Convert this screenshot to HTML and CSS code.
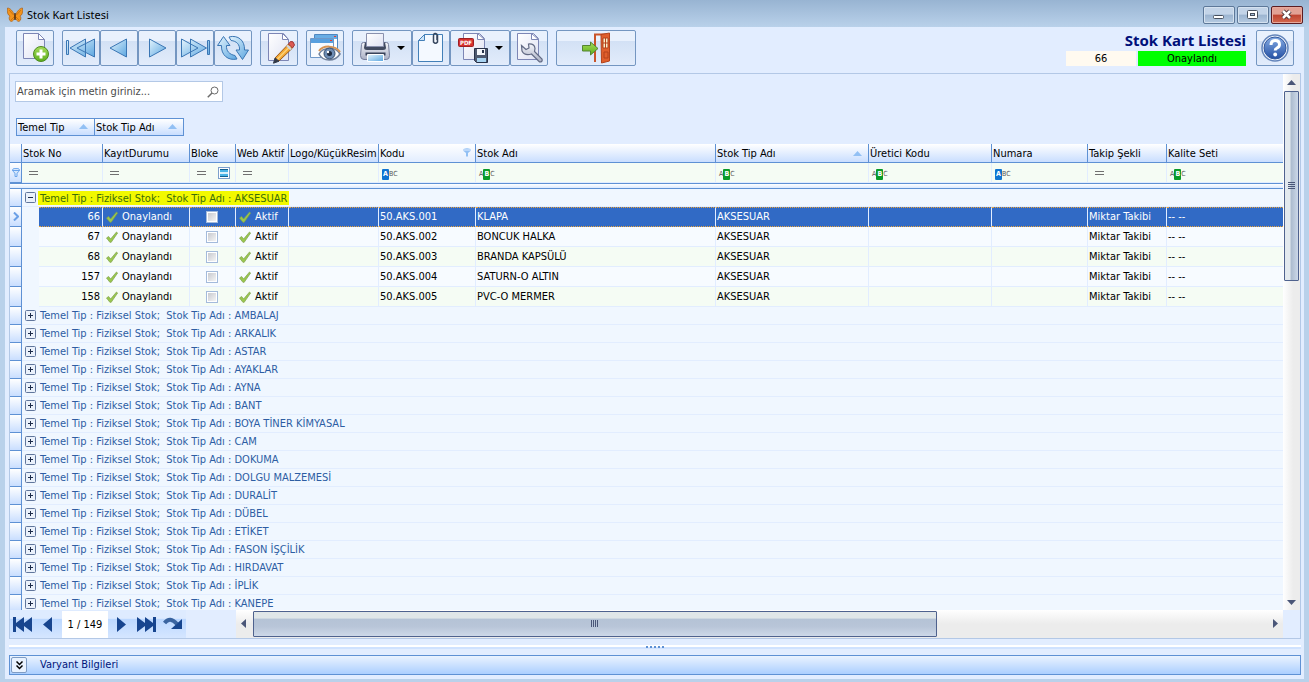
FILE: index.html
```html
<!DOCTYPE html>
<html lang="tr">
<head>
    <meta charset="UTF-8">
    <meta name="viewport" content="width=device-width, initial-scale=1.0">
    <title>Stok Kart Listesi</title>
    <link rel="stylesheet" href="styles.css">
</head>
<body>
    <!-- Shared gradients and symbols -->
    <svg class="sprite" aria-hidden="true">
        <defs>
            <linearGradient id="sky" x1="0" y1="0" x2="1" y2="1">
                <stop offset="0" stop-color="#e4f4fd"/>
                <stop offset="1" stop-color="#5ba6e0"/>
            </linearGradient>
            <linearGradient id="paper" x1="0" y1="0" x2="1" y2="1">
                <stop offset="0" stop-color="#ffffff"/>
                <stop offset="1" stop-color="#dfe2f3"/>
            </linearGradient>
            <linearGradient id="green" x1="0" y1="0" x2="0" y2="1">
                <stop offset="0" stop-color="#a5dc58"/>
                <stop offset="1" stop-color="#5cae1c"/>
            </linearGradient>
            <linearGradient id="metal" x1="0" y1="0" x2="0" y2="1">
                <stop offset="0" stop-color="#f4f5fa"/>
                <stop offset="1" stop-color="#a9afc4"/>
            </linearGradient>
            <linearGradient id="help" x1="0" y1="0" x2="0" y2="1">
                <stop offset="0" stop-color="#86ace4"/>
                <stop offset="1" stop-color="#2450a4"/>
            </linearGradient>
        </defs>
        <symbol id="check" viewBox="0 0 12 12">
            <path d="M.5 7 2.6 5.500 4.600 8 10.500 1 11.600 2 5.200 11.300H3.900z" fill="#9ac84e" stroke="#7fa04e" stroke-width=".7"/>
        </symbol>
        <symbol id="plus" viewBox="0 0 11 11">
            <rect x=".5" y=".5" width="10" height="10" rx="1" fill="#eaf1fb" stroke="#60769c"/>
            <path d="M3 5.500h5M5.500 3v5" stroke="#1d2c4a"/>
        </symbol>
        <symbol id="minus" viewBox="0 0 11 11">
            <rect x=".5" y=".5" width="10" height="10" rx="1" fill="#eaf1fb" stroke="#60769c"/>
            <path d="M3 5.500h5" stroke="#1d2c4a"/>
        </symbol>
        <symbol id="asc" viewBox="0 0 9 5">
            <path d="M0 5 4.500 0 9 5z" fill="#92c0f4"/>
        </symbol>
        <symbol id="funnel" viewBox="0 0 8 9">
            <path d="M.7 1.500C.7 0 7.300 0 7.300 1.500V3L5 5.200V8.500H3V5.200L.7 3zM.7 2.500h6.600" fill="#d5e7fd" stroke="#6aa4ec"/>
        </symbol>
        <symbol id="funnel-on" viewBox="0 0 8 9">
            <path d="M.5 1q3.500-1.500 7 0v2L5 5v3.500H3V5L.5 3z" fill="#92c0f4"/>
            <path d="M1 2h6" stroke="#e2edff"/>
        </symbol>
        <symbol id="equals" viewBox="0 0 9 4">
            <path d="M0 .5h9M0 3.500h9" stroke="#707070"/>
        </symbol>
    </svg>

    <!-- Title bar -->
    <header class="titlebar">
        <svg class="app-icon" viewBox="0 0 16 16">
            <path d="M8 9C6 4 3 1 .5 1 0 5 .5 8 3 9 1.500 10.500 2 13.500 4 14.500 6 14.500 7.500 12 8 10z" fill="#f3941d" stroke="#a5560c" stroke-width=".6"/>
            <path d="M8 9c2-5 5-8 7.500-8 .5 4 0 7-2.500 8 1.500 1.500 1 4.500-1 5.500-2 0-3.500-2.500-4-4.500z" fill="#f3941d" stroke="#a5560c" stroke-width=".6"/>
            <path d="M2 3l4.500 5M14 3 9.500 8M4 13l3-3M12 13l-3-3" stroke="#b9650f" stroke-width=".7"/>
            <path d="M8 6v7" stroke="#3b1d05" stroke-width="1.200"/>
        </svg>
        <span class="titlebar-text">Stok Kart Listesi</span>
        <button class="win-btn" aria-label="Minimize">
            <svg width="14" height="12" viewBox="0 0 14 12"><rect x="1.500" y="6.500" width="10" height="3" rx="1" fill="#fff" stroke="#47505e"/></svg>
        </button>
        <button class="win-btn" aria-label="Maximize">
            <svg width="14" height="12" viewBox="0 0 14 12"><rect x="1.500" y="1.500" width="10" height="8" rx="1" fill="#fff" stroke="#47505e"/><rect x="4.500" y="4.500" width="4" height="2" fill="#a9c0da" stroke="#47505e"/></svg>
        </button>
        <button class="win-btn win-close" aria-label="Close">
            <svg width="14" height="12" viewBox="0 0 14 12"><path d="M3 2l7 7M10 2 3 9" stroke="#4a3034" stroke-width="4.500"/><path d="M3 2l7 7M10 2 3 9" stroke="#fff" stroke-width="2.500"/></svg>
        </button>
    </header>

    <div class="window">
        <!-- Toolbar -->
        <div class="toolbar">
            <div class="btn-group">
                <button class="tool" aria-label="Yeni">
                    <svg width="32" height="32" viewBox="0 0 32 32"><path d="M4.500 1.500h15l6 6v19h-21z" fill="url(#paper)" stroke="#7d86b5"/><path d="M19.500 1.500v6h6z" fill="#fff" stroke="#7d86b5"/><circle cx="22" cy="22" r="7.500" fill="url(#green)" stroke="#4d8b20"/><path d="M22 17.500v9M17.500 22h9" stroke="#fff" stroke-width="3"/></svg>
                </button>
            </div>
            <div class="btn-group">
                <button class="tool" aria-label="İlk">
                    <svg width="32" height="32" viewBox="0 0 32 32"><g fill="url(#sky)" stroke="#3a76b4"><path d="M1.500 8.500h2v14h-2zM20.500 7v18L5 16zM29.500 7v18L12 16z"/></g></svg>
                </button>
                <button class="tool" aria-label="Önceki">
                    <svg width="32" height="32" viewBox="0 0 32 32"><path d="M23.500 7v18L7 16z" fill="url(#sky)" stroke="#3a76b4"/></svg>
                </button>
                <button class="tool" aria-label="Sonraki">
                    <svg width="32" height="32" viewBox="0 0 32 32"><path d="M8.500 7v18l16.500-9z" fill="url(#sky)" stroke="#3a76b4"/></svg>
                </button>
                <button class="tool" aria-label="Son">
                    <svg width="32" height="32" viewBox="0 0 32 32"><g fill="url(#sky)" stroke="#3a76b4"><path d="M28.500 8.500h2v14h-2zM11.500 7v18l16-9zM2.500 7v18L19 16z"/></g></svg>
                </button>
                <button class="tool" aria-label="Yenile">
                    <svg width="32" height="32" viewBox="0 0 32 32"><g fill="url(#sky)" stroke="#3a76b4"><path d="M6.500 4.500 13 13.500H9.500C9 19 12.500 22.500 18 23.500l2 3.500C11 29 4 23 4.500 13.500H.5z"/><path d="M25.500 27.500 19 18h3.500C23 12.500 19.500 9 14 8.500L12 5c9-2.500 16 3.500 15.500 13h4z"/></g></svg>
                </button>
            </div>
            <div class="btn-group">
                <button class="tool" aria-label="Düzenle">
                    <svg width="32" height="32" viewBox="0 0 32 32"><path d="M5.500 1.500h15l5 6v21h-20z" fill="url(#paper)" stroke="#7d86b5"/><path d="M19.500 1.500v6h6z" fill="#fff" stroke="#7d86b5"/><path d="M12 26 25.500 12l4 4L16 29z" fill="#f5a833" stroke="#9c5b1c"/><path d="M14 27.500 27.500 14" stroke="#fcd27c" stroke-width="1.500"/><path d="M12 26l4 3.200-5.500 2z" fill="#333a48" stroke="#333a48"/><path d="m25.500 12 2-2.500q3-1 4 3.500l-2 3z" fill="#dc5a52" stroke="#a03a38"/><path d="m24 13.500 4 4" stroke="#cfd5e2" stroke-width="2"/></svg>
                </button>
            </div>
            <div class="btn-group">
                <button class="tool" aria-label="Göster">
                    <svg width="32" height="32" viewBox="0 0 32 32"><path d="M5.500 2.500h23v20h-23z" fill="#fff" stroke="#4f87c1"/><path d="M6 3h22v4H6z" fill="#69ade4"/><path d="M1.500 6.500h23v19h-23z" fill="#f8fbff" stroke="#6f98c8"/><path d="M2 7h22v4H2z" fill="#58a0df"/><path d="M25 4h2v1h-2zM21 8h2v1h-2z" fill="#e53b30"/><path d="M10 22C14 15 26 14 31 22 26 30 14 30 10 22z" fill="#fff" stroke="#71829d" stroke-width="1.500"/><path d="M10 19C14 13 26 13 31 20" fill="none" stroke="#d79555" stroke-width="2"/><circle cx="20.500" cy="21.500" r="5.500" fill="#6e8db4" stroke="#354c6c"/><circle cx="20.500" cy="21.500" r="2.500" fill="#1d2a40"/><circle cx="19" cy="20" r="1.200" fill="#fff"/></svg>
                </button>
            </div>
            <div class="btn-group">
                <button class="tool tool-menu" aria-label="Yazdır">
                    <svg width="32" height="32" viewBox="0 0 32 32"><path d="M2.500 12.500q0-2 2-2h23q2 0 2 2l1 11q0 4-3 4H5q-3.500 0-3.500-4z" fill="url(#metal)" stroke="#777f9d"/><path d="M6 10.500h20l1 5q0 2.500-3 2.500H8q-3 0-3-2.500z" fill="#414a60"/><path d="M7.500 1.500h17v13h-17z" fill="url(#paper)" stroke="#8a91ae"/><path d="M6.500 20.500h20v3h-20z" fill="#39435a"/><path d="M8.500 22.500h16v7h-16z" fill="url(#sky)" stroke="#fff"/></svg>
                    <svg class="caret" width="8" height="4" viewBox="0 0 8 4"><path d="M0 0h8L4 4z"/></svg>
                </button>
                <button class="tool" aria-label="Ek">
                    <svg width="32" height="32" viewBox="0 0 32 32"><path d="M9.500 2.500h18v27h-24v-21z" fill="#f4f9ff" stroke="#4380b8"/><path d="M9.500 2.500v6h-6z" fill="#cde4f8" stroke="#4380b8"/><path d="M22.500 3v7q-2 2.500-4 0V4q0-3 2-2.500t1.500 2V8" fill="none" stroke="#36465e" stroke-width="1.500"/></svg>
                </button>
                <button class="tool tool-menu" aria-label="PDF kaydet">
                    <svg width="32" height="32" viewBox="0 0 32 32"><path d="M6.500 1.500h16l5 5v21h-21z" fill="url(#paper)" stroke="#7d86b5"/><path d="M20.500 1.500v6h7z" fill="#fff" stroke="#7d86b5"/><rect x="1.500" y="6.500" width="15" height="8" rx="1" fill="#d5302e" stroke="#9d2023"/><text x="9" y="13" class="pdf-label">PDF</text><path d="M17.500 16.500h13v14h-11l-2-2z" fill="#4d586f" stroke="#273249"/><path d="M20 17h8v6h-8z" fill="#f4f6fb"/><path d="M25 18h2v3h-2z" fill="#273249"/><path d="M20 26h9v4h-9z" fill="#a9d4f2"/></svg>
                    <svg class="caret" width="8" height="4" viewBox="0 0 8 4"><path d="M0 0h8L4 4z"/></svg>
                </button>
                <button class="tool" aria-label="Ayarlar">
                    <svg width="32" height="32" viewBox="0 0 32 32"><path d="M4.500 1.500h16l5 5v21h-21z" fill="url(#paper)" stroke="#7d86b5"/><path d="M18.500 1.500v6h7z" fill="#fff" stroke="#7d86b5"/><path d="M8.500 13.500l4.500 4 3-1.500-.5-4q6-.5 6.500 4.500l-.5 3 7.500 7.500q1 3-2.500 3l-8-8q-7 2-9.500-3z" fill="url(#metal)" stroke="#626a84" stroke-width="1.200"/></svg>
                </button>
            </div>
            <div class="btn-group">
                <button class="tool tool-wide" aria-label="Çıkış">
                    <svg width="32" height="32" viewBox="0 0 32 32"><path d="M15 30V2.500h11" fill="none" stroke="#c9542a" stroke-width="2"/><path d="M21 2.500 29.500 1v28l-8 2z" fill="#e05f2c" stroke="#b3431c"/><path d="M23 6h5v10h-5z" fill="#fbeec8" stroke="#b3431c"/><path d="M25.500 6v10M23 11h5M24 20h4v6h-4z" fill="none" stroke="#b3431c"/><path d="M2.500 13.500h8v-3.500l7.500 6.500-7.500 6.500v-4h-8z" fill="url(#green)" stroke="#548433"/></svg>
                </button>
            </div>
            <div class="record">
                <h1 class="record-title">Stok Kart Listesi</h1>
                <div class="record-info">
                    <span class="record-no">66</span>
                    <span class="record-state">Onaylandı</span>
                </div>
            </div>
            <button class="tool" aria-label="Yardım">
                <svg width="32" height="32" viewBox="0 0 32 32"><circle cx="16" cy="16" r="13" fill="#f4f8ff" stroke="#6485bb" stroke-width="1.500"/><circle cx="16" cy="16" r="11" fill="url(#help)" stroke="#32589c"/><path d="M12 13q0-4.500 4.200-4.500T20.500 12.500q0 2.500-2.500 3.500-1.800.800-1.800 2.500" fill="none" stroke="#fff" stroke-width="3"/><circle cx="16.200" cy="22.500" r="1.900" fill="#fff"/></svg>
            </button>
        </div>

        <!-- Grid -->
        <main class="grid">
            <div class="grid-body">
                <div class="search">
                    <input class="search-input" type="text" placeholder="Aramak için metin giriniz..." aria-label="Ara">
                    <svg width="12" height="12" viewBox="0 0 12 12"><circle cx="7.500" cy="4.500" r="3.500" fill="none" stroke="#6b6b6b"/><path d="M5 7 .8 11.300" stroke="#6b6b6b" stroke-width="1.500"/></svg>
                </div>
                <div class="group-panel">
                    <button class="group-chip chip-type">Temel Tip<svg width="9" height="5"><use href="#asc"/></svg></button>
                    <button class="group-chip chip-name">Stok Tip Adı<svg width="9" height="5"><use href="#asc"/></svg></button>
                </div>
                <table class="stock-table">
                    <colgroup>
                        <col class="c-mark"><col class="c-indent"><col class="c-no"><col class="c-status"><col class="c-block"><col class="c-web"><col class="c-logo"><col class="c-code"><col class="c-name"><col class="c-type"><col class="c-maker"><col class="c-number"><col class="c-track"><col>
                    </colgroup>
                    <thead>
                        <tr class="head-row">
                            <th class="mark"></th>
                            <th colspan="2">Stok No</th>
                            <th>KayıtDurumu</th>
                            <th>Bloke</th>
                            <th>Web Aktif</th>
                            <th>Logo/KüçükResim</th>
                            <th class="sorted">Kodu<svg class="head-icon" width="8" height="9"><use href="#funnel-on"/></svg></th>
                            <th>Stok Adı</th>
                            <th>Stok Tip Adı<svg class="head-icon head-asc" width="9" height="5"><use href="#asc"/></svg></th>
                            <th>Üretici Kodu</th>
                            <th>Numara</th>
                            <th>Takip Şekli</th>
                            <th>Kalite Seti</th>
                        </tr>
                        <tr class="filter-row">
                            <td class="mark"><svg width="8" height="9"><use href="#funnel"/></svg></td>
                            <td colspan="2"><svg class="eq" width="9" height="4"><use href="#equals"/></svg></td>
                            <td><svg class="eq" width="9" height="4"><use href="#equals"/></svg></td>
                            <td><div class="tri"><svg width="9" height="4"><use href="#equals"/></svg><input class="tri-check" type="checkbox" aria-label="Bloke filtresi"></div></td>
                            <td><svg class="eq" width="9" height="4"><use href="#equals"/></svg></td>
                            <td></td>
                            <td><span class="abc starts"><b>A</b>BC</span></td>
                            <td><span class="abc has">A<b>B</b>C</span></td>
                            <td><span class="abc has">A<b>B</b>C</span></td>
                            <td><span class="abc has">A<b>B</b>C</span></td>
                            <td><span class="abc starts"><b>A</b>BC</span></td>
                            <td><svg class="eq" width="9" height="4"><use href="#equals"/></svg></td>
                            <td><span class="abc has">A<b>B</b>C</span></td>
                        </tr>
                        <tr class="rule-row"><td colspan="14"></td></tr>
                    </thead>
                    <tbody>
                        <tr class="group-row">
                            <td class="mark"></td>
                            <td colspan="13"><svg class="expander" width="11" height="11"><use href="#minus"/></svg><span class="highlight">Temel Tip : Fiziksel Stok;&nbsp; Stok Tip Adı : AKSESUAR</span></td>
                        </tr>
                        <tr class="data-row selected">
                            <td class="mark"><svg width="6" height="9" viewBox="0 0 6 9"><path d="M1 .5 5 4.500 1 8.500" fill="none" stroke="#6a9fe6" stroke-width="2"/></svg></td>
                            <td class="indent"></td>
                            <td class="num">66</td>
                            <td><svg class="tick" width="12" height="12"><use href="#check"/></svg>Onaylandı</td>
                            <td class="box"><input type="checkbox" aria-label="Bloke 66"></td>
                            <td><svg class="tick" width="12" height="12"><use href="#check"/></svg>Aktif</td>
                            <td></td>
                            <td>50.AKS.001</td>
                            <td>KLAPA</td>
                            <td>AKSESUAR</td>
                            <td></td>
                            <td></td>
                            <td>Miktar Takibi</td>
                            <td>-- --</td>
                        </tr>
                        <tr class="data-row">
                            <td class="mark"></td>
                            <td class="indent"></td>
                            <td class="num">67</td>
                            <td><svg class="tick" width="12" height="12"><use href="#check"/></svg>Onaylandı</td>
                            <td class="box"><input type="checkbox" aria-label="Bloke 67"></td>
                            <td><svg class="tick" width="12" height="12"><use href="#check"/></svg>Aktif</td>
                            <td></td>
                            <td>50.AKS.002</td>
                            <td>BONCUK HALKA</td>
                            <td>AKSESUAR</td>
                            <td></td>
                            <td></td>
                            <td>Miktar Takibi</td>
                            <td>-- --</td>
                        </tr>
                        <tr class="data-row even">
                            <td class="mark"></td>
                            <td class="indent"></td>
                            <td class="num">68</td>
                            <td><svg class="tick" width="12" height="12"><use href="#check"/></svg>Onaylandı</td>
                            <td class="box"><input type="checkbox" aria-label="Bloke 68"></td>
                            <td><svg class="tick" width="12" height="12"><use href="#check"/></svg>Aktif</td>
                            <td></td>
                            <td>50.AKS.003</td>
                            <td>BRANDA KAPSÜLÜ</td>
                            <td>AKSESUAR</td>
                            <td></td>
                            <td></td>
                            <td>Miktar Takibi</td>
                            <td>-- --</td>
                        </tr>
                        <tr class="data-row">
                            <td class="mark"></td>
                            <td class="indent"></td>
                            <td class="num">157</td>
                            <td><svg class="tick" width="12" height="12"><use href="#check"/></svg>Onaylandı</td>
                            <td class="box"><input type="checkbox" aria-label="Bloke 157"></td>
                            <td><svg class="tick" width="12" height="12"><use href="#check"/></svg>Aktif</td>
                            <td></td>
                            <td>50.AKS.004</td>
                            <td>SATURN-O ALTIN</td>
                            <td>AKSESUAR</td>
                            <td></td>
                            <td></td>
                            <td>Miktar Takibi</td>
                            <td>-- --</td>
                        </tr>
                        <tr class="data-row even">
                            <td class="mark"></td>
                            <td class="indent"></td>
                            <td class="num">158</td>
                            <td><svg class="tick" width="12" height="12"><use href="#check"/></svg>Onaylandı</td>
                            <td class="box"><input type="checkbox" aria-label="Bloke 158"></td>
                            <td><svg class="tick" width="12" height="12"><use href="#check"/></svg>Aktif</td>
                            <td></td>
                            <td>50.AKS.005</td>
                            <td>PVC-O MERMER</td>
                            <td>AKSESUAR</td>
                            <td></td>
                            <td></td>
                            <td>Miktar Takibi</td>
                            <td>-- --</td>
                        </tr>
                    </tbody>
                    <tbody id="groups"></tbody>
                </table>
            </div>
            <div class="vscroll">
                <svg width="9" height="5" viewBox="0 0 9 5"><path d="M0 5 4.500 0 9 5z" fill="#4a5678"/></svg>
                <div class="vthumb"><svg width="7" height="8" viewBox="0 0 7 8"><path d="M0 .5h7M0 2.500h7M0 4.500h7M0 6.500h7" stroke="#4a5678"/></svg></div>
                <svg class="vdown" width="9" height="5" viewBox="0 0 9 5"><path d="M0 0h9L4.500 5z" fill="#4a5678"/></svg>
            </div>
            <div class="grid-foot">
                <div class="navigator">
                    <button class="nav nav-big" aria-label="İlk kayıt"><svg width="20" height="15" viewBox="0 0 20 15"><path d="M0 0h3v6l8-6v6l8-6v15l-8-6v6L3 9v6H0z" fill="#17458f"/></svg></button>
                    <button class="nav" aria-label="Önceki kayıt"><svg width="9" height="15" viewBox="0 0 9 15"><path d="M9 0v15L0 7.500z" fill="#17458f"/></svg></button>
                    <span class="page">1 / 149</span>
                    <button class="nav" aria-label="Sonraki kayıt"><svg width="9" height="15" viewBox="0 0 9 15"><path d="M0 0v15l9-7.500z" fill="#17458f"/></svg></button>
                    <button class="nav" aria-label="Son kayıt"><svg width="20" height="15" viewBox="0 0 20 15"><path d="M19 0h-3v6L8 0v6L0 0v15l8-6v6l8-6v6h3z" fill="#17458f"/></svg></button>
                    <button class="nav" aria-label="Yenile"><svg width="20" height="15" viewBox="0 0 20 15"><path d="M1.500 6Q7-1 14 7" fill="none" stroke="#3a64a0" stroke-width="4"/><path d="M19 2v10H8z" fill="#17458f"/></svg></button>
                </div>
                <div class="hscroll">
                    <svg width="5" height="9" viewBox="0 0 5 9"><path d="M5 0v9L0 4.500z" fill="#4a5678"/></svg>
                    <div class="hthumb"><svg width="8" height="7" viewBox="0 0 8 7"><path d="M.5 0v7M2.500 0v7M4.500 0v7M6.500 0v7" stroke="#4a5678"/></svg></div>
                    <svg class="hright" width="5" height="9" viewBox="0 0 5 9"><path d="M0 0v9l5-4.500z" fill="#4a5678"/></svg>
                </div>
            </div>
        </main>

        <div class="splitter">
            <svg width="18" height="3" viewBox="0 0 18 3"><path d="M0 1h2M4 1h2M8 1h2M12 1h2M16 1h2" stroke="#5e91d4" stroke-width="2"/></svg>
        </div>

        <!-- Variant details -->
        <div class="variant">
            <button class="variant-toggle" aria-label="Aç">
                <svg width="7" height="9" viewBox="0 0 7 9"><path d="M.5.5l3 3 3-3M.5 4.500l3 3 3-3" fill="none" stroke="#000" stroke-width="1.500"/></svg>
            </button>
            <span>Varyant Bilgileri</span>
        </div>
    </div>

    <script>
        const groups = ['AMBALAJ', 'ARKALIK', 'ASTAR', 'AYAKLAR', 'AYNA', 'BANT', 'BOYA TİNER KİMYASAL', 'CAM',
            'DOKUMA', 'DOLGU MALZEMESİ', 'DURALİT', 'DÜBEL', 'ETİKET', 'FASON İŞÇİLİK', 'HIRDAVAT', 'İPLİK', 'KANEPE'];
        const body = document.getElementById('groups');

        groups.forEach(name => {
            const row = document.createElement('tr');
            row.className = 'group-row';
            row.innerHTML = `
                <td class="mark"></td>
                <td colspan="13"><svg class="expander" width="11" height="11"><use href="#plus"/></svg><span class="group-text">Temel Tip : Fiziksel Stok;&nbsp; Stok Tip Adı : ${name}</span></td>
            `;
            body.appendChild(row);
        });
    </script>
</body>
</html>
```
FILE: styles.css
```css
* {
    box-sizing: border-box;
}
body {
    margin: 0;
    height: 100vh;
    display: flex;
    flex-direction: column;
    overflow: hidden;
    background-color: #b9d1ea;
    font: 11px/14px Tahoma, "DejaVu Sans Condensed", "Noto Sans", sans-serif;
    color: #000;
}
button, input {
    font: inherit;
    color: inherit;
    margin: 0;
    padding: 0;
}
svg {
    flex: none;
}
.sprite {
    position: absolute;
    width: 0;
    height: 0;
}

/* Title bar */
.titlebar {
    flex: none;
    display: flex;
    align-items: center;
    gap: 2px;
    height: 27px;
    padding: 3px 6px 0 7px;
    background: linear-gradient(#98b4d2, #b9d1ea);
}
.app-icon {
    width: 16px;
    height: 16px;
}
.titlebar-text {
    flex: 1;
    padding-left: 2px;
    font: 11px/16px "Segoe UI", "Noto Sans", sans-serif;
}
.win-btn {
    display: flex;
    align-items: center;
    justify-content: center;
    width: 32px;
    height: 18px;
    border: 1px solid #5d7899;
    border-radius: 2px;
    background: linear-gradient(#c3d4e8 45%, #9bb4d0 50%, #b6cbe2);
    box-shadow: inset 0 0 0 1px #d5e2f0;
}
.win-close {
    border-color: #5b1c22;
    background: linear-gradient(#e2a195 45%, #be4330 50%, #d4694f);
    box-shadow: inset 0 0 0 1px #e6a99d;
}

.window {
    flex: 1;
    min-height: 0;
    display: flex;
    flex-direction: column;
    margin: 0 5px 3px;
    padding: 3px 3px 4px 4px;
    background-color: #e2edff;
}

/* Toolbar */
.toolbar {
    flex: none;
    display: flex;
    gap: 8px;
    height: 43px;
    padding: 0 7px;
}
.btn-group {
    display: flex;
}
.tool {
    display: flex;
    align-items: center;
    justify-content: center;
    width: 38px;
    height: 36px;
    border: 1px solid #7496c1;
    border-radius: 2px;
    background: linear-gradient(#e9f1fd 28%, #d3e1f5 30%, #e2ecfb);
}
.tool-menu {
    width: 60px;
    gap: 6px;
    padding-right: 6px;
    justify-content: flex-end;
}
.tool-wide {
    width: 80px;
}
.pdf-label {
    font: bold 6px "DejaVu Sans Condensed", sans-serif;
    fill: #fff;
    text-anchor: middle;
}
.record {
    flex: 1;
    display: flex;
    flex-direction: column;
    align-items: flex-end;
    padding-right: 2px;
}
.record-title {
    margin: 0;
    font: bold 15px/21px "Segoe UI", "Noto Sans", sans-serif;
    color: #00107a;
}
.record-info {
    display: flex;
    gap: 2px;
    line-height: 15px;
    text-align: center;
}
.record-no {
    width: 70px;
    background-color: #fffaf0;
}
.record-state {
    width: 108px;
    background-color: #0f0;
}

/* Grid */
.grid {
    flex: 1;
    min-height: 0;
    display: grid;
    grid-template-columns: minmax(0, 1fr) 17px;
    grid-template-rows: minmax(0, 1fr) 28px;
    border: 1px solid #b3c8e6;
}
.grid-body {
    overflow: hidden;
    background-color: #e2edff;
}
.search {
    display: flex;
    align-items: center;
    width: 208px;
    height: 21px;
    margin: 7px 0 0 5px;
    padding: 0 3px 0 1px;
    border: 1px solid #b3c8e6;
    background-color: #fff;
}
.search-input {
    flex: 1;
    border: 0;
    outline: none;
    background: none;
}
.search-input::placeholder {
    color: #4a4a4a;
    opacity: 1;
}
.group-panel {
    display: flex;
    margin: 16px 0 8px 6px;
}
.group-chip {
    display: flex;
    align-items: center;
    justify-content: space-between;
    height: 18px;
    padding: 1px 6px 0 1px;
    border: 1px solid #5e91d4;
    background: linear-gradient(#fff, #c9deff);
}
.group-chip svg {
    margin-bottom: 3px;
}
.chip-type {
    width: 78px;
    border-right: 0;
}
.chip-name {
    width: 90px;
}

.stock-table {
    width: 100%;
    table-layout: fixed;
    border-collapse: separate;
    border-spacing: 0;
}
.c-mark { width: 12px; }
.c-indent { width: 17px; }
.c-no { width: 64px; }
.c-status { width: 87px; }
.c-block { width: 46px; }
.c-web { width: 53px; }
.c-logo { width: 90px; }
.c-code { width: 97px; }
.c-name { width: 240px; }
.c-type { width: 153px; }
.c-maker { width: 123px; }
.c-number { width: 96px; }
.c-track { width: 79px; }

th, td {
    padding: 1px 1px 0;
    text-align: left;
    font-weight: normal;
    white-space: nowrap;
    border-right: 1px solid #e2edff;
    border-bottom: 1px solid #e2edff;
}
th:last-child, td:last-child {
    border-right: 0;
}
td svg, td input {
    vertical-align: middle;
}
.head-row th {
    height: 19px;
    border-color: #5e91d4;
    background: linear-gradient(#fff, #c9deff);
}
.head-row .sorted {
    background: linear-gradient(#fff, #e2edff);
}
.head-icon {
    float: right;
    margin: 1px 3px 0 0;
}
.head-asc {
    margin: 4px 5px 0 0;
}
.filter-row td {
    height: 20px;
    padding-top: 0;
    background-color: #f5fcf4;
}
.stock-table .mark {
    padding: 0;
    text-align: center;
    line-height: 9px;
    border-color: #5e91d4;
    background: linear-gradient(#fff, #c9deff);
}
.eq {
    margin-left: 6px;
}
.tri {
    display: flex;
    align-items: center;
    justify-content: space-between;
    padding: 0 4px 0 6px;
}
.abc {
    display: inline-flex;
    margin-left: 2px;
    font: 7px/11px "DejaVu Sans Condensed", sans-serif;
    color: #555;
}
.abc b {
    width: 7px;
    border-radius: 1px;
    text-align: center;
    color: #fff;
}
.starts b {
    background-color: #0f74d1;
}
.has b {
    background-color: #0a9a28;
}
.rule-row td {
    height: 6px;
    padding: 0;
    border-top: 1px solid #5e91d4;
    border-bottom: 1px solid #5e91d4;
    background: linear-gradient(#fff, #dbe9ff);
}

.group-row td {
    height: 18px;
    padding: 0 0 0 3px;
    color: #2d5da3;
    background-color: #f0f7ff;
}
.expander {
    margin-right: 2px;
}
.highlight, .group-text {
    display: inline-block;
    padding: 1px 2px 0;
    vertical-align: middle;
}
.highlight {
    line-height: 13px;
    color: #3c6e08;
    background-color: #f2f900;
}
.data-row td {
    height: 20px;
    background-color: #f7fbff;
}
.data-row.even td {
    background-color: #f5fcf4;
}
.data-row .indent, .data-row.even .indent {
    border-color: #f0f7ff;
    background-color: #f0f7ff;
}
.data-row .num {
    padding-right: 2px;
    text-align: right;
}
.data-row .box {
    padding-right: 2px;
    text-align: center;
}
.data-row.selected td:not(.mark):not(.indent) {
    padding-top: 0;
    color: #fff;
    border-top: 1px dotted #e8a33c;
    border-bottom: 1px dotted #e8a33c;
    background-color: #316ac5;
}
.tick {
    margin: 0 4px 0 2px;
}
input[type="checkbox"] {
    appearance: none;
    width: 12px;
    height: 12px;
    border: 1px solid #a3badb;
    outline: 1px solid #fff;
    outline-offset: -2px;
    background: linear-gradient(135deg, #c2c4ca, #fafafa);
}
input.tri-check {
    border-color: #7da0cc;
    background: linear-gradient(#12608e 2px, #4ab4e6 2px, #4ab4e6 4px, #d8effa 4px, #d8effa 6px, #4ab4e6 6px, #4ab4e6 8px, #12608e 8px);
}

/* Scroll bars */
.vscroll {
    display: flex;
    flex-direction: column;
    align-items: center;
    padding: 6px 0 5px;
    background: linear-gradient(90deg, #fff, #ececec 60%);
}
.vthumb {
    display: flex;
    align-items: center;
    justify-content: center;
    width: 15px;
    height: 190px;
    margin-top: 6px;
    border: 1px solid #4f628e;
    border-radius: 1px;
    background: linear-gradient(90deg, #e3e9ee 35%, #aebdd0 50%, #ccd8e8);
}
.vdown {
    margin-top: auto;
}
.grid-foot {
    grid-column: 1 / 3;
    display: flex;
    padding-right: 17px;
}
.navigator {
    flex: none;
    display: flex;
    align-items: center;
    width: 176px;
    margin-right: 50px;
    padding-left: 3px;
    background: linear-gradient(#deebff 30%, #bcd8ff 32%, #d5e6ff);
}
.nav {
    display: flex;
    border: 0;
    margin-right: 10px;
    background: none;
}
.page {
    width: 46px;
    margin-right: 9px;
    line-height: 27px;
    text-align: center;
    background-color: #fff;
}
.page ~ .nav {
    margin-right: 0;
}
.page ~ .nav + .nav {
    margin-left: 11px;
}
.page ~ .nav + .nav + .nav {
    margin-left: 6px;
}
.hscroll {
    flex: 1;
    display: flex;
    align-items: center;
    padding: 0 5px 1px;
    background: linear-gradient(#fff, #ececec 50%);
}
.hthumb {
    display: flex;
    align-items: center;
    justify-content: center;
    width: 66%;
    height: 26px;
    margin-left: 7px;
    border: 1px solid #4f628e;
    border-radius: 1px;
    background: linear-gradient(#e0e6e8 25%, #b5c3d6 30%, #b8c5d8 60%, #cdd8e8);
}
.hright {
    margin-left: auto;
}

.splitter {
    flex: none;
    display: flex;
    justify-content: center;
    align-items: center;
    height: 16px;
    background: linear-gradient(#e2edff 6px, #fff 6px, #fff 8px, #cfe2ff 8px, #cfe2ff 10px, #e2edff 10px);
}
.variant {
    flex: none;
    display: flex;
    align-items: center;
    gap: 13px;
    height: 20px;
    padding: 0 1px;
    border: 1px solid #5e91d4;
    background: linear-gradient(#eaf3ff, #abcfff);
    color: #00157a;
}
.variant-toggle {
    display: flex;
    align-items: center;
    justify-content: center;
    width: 16px;
    height: 16px;
    border: 1px solid #7f9cc4;
    border-radius: 2px;
    background: #e9f2ff;
}
```
